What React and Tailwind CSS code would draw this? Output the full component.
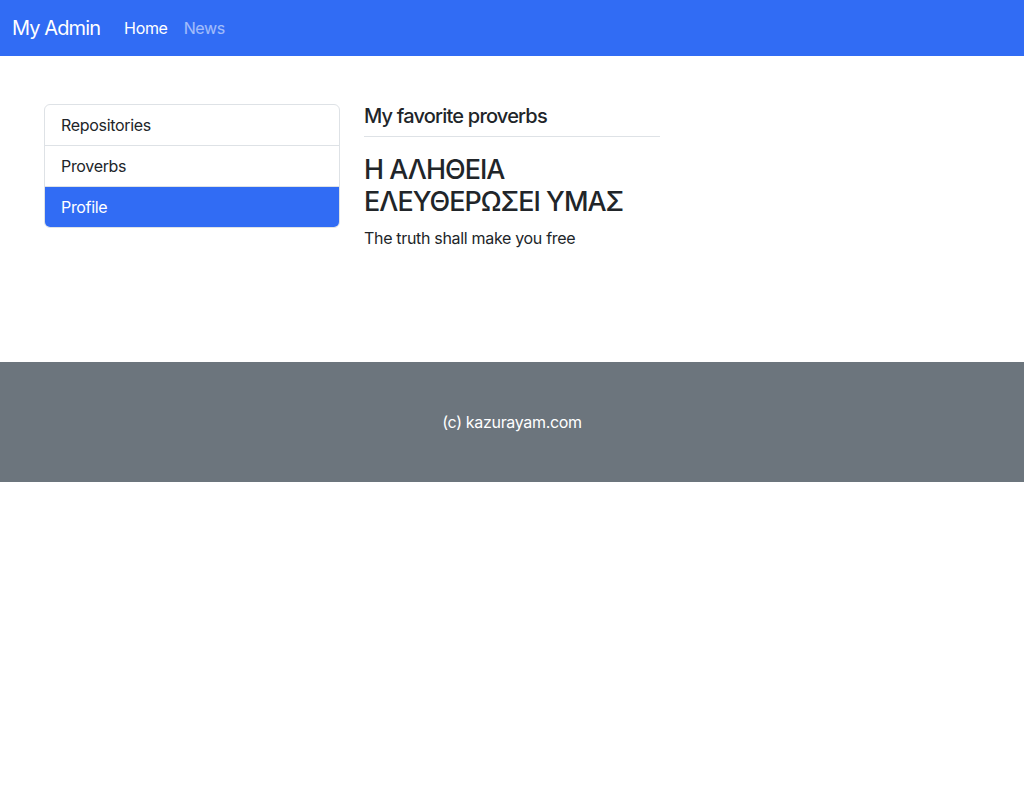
import React from 'react';

const menu = ['Repositories', 'Proverbs', 'Profile'];

const App = () => {
  return (
    <div className="min-h-[800px] bg-white text-[#212529] font-['Inter','Noto_Sans',sans-serif] text-base leading-6 tracking-[-0.02em]">
      <nav className="h-14 bg-[#316cf4] flex items-center px-3">
        <span className="text-[20px] text-white mr-4 tracking-[-0.045em]">My Admin</span>
        <a className="px-2 text-white">Home</a>
        <a className="px-2 text-white/55">News</a>
      </nav>

      <main className="w-[960px] mx-auto px-3 pt-12 pb-12">
        <div className="flex gap-6">
          <div className="w-[296px]">
            <ul className="border border-[#dee2e6] rounded-md overflow-hidden">
              {menu.map((item, i) => (
                <li
                  key={item}
                  className={`px-4 py-2 ${i > 0 ? 'border-t border-[#dee2e6]' : ''} ${
                    item === 'Profile' ? 'bg-[#316cf4] text-white border-[#316cf4]' : ''
                  }`}
                >
                  {item}
                </li>
              ))}
            </ul>
          </div>
          <div className="w-[296px]">
            <h5 className="text-[20px] leading-6 font-medium pb-2 border-b border-[#dee2e6] mb-4 tracking-[-0.04em]">
              My favorite proverbs
            </h5>
            <h3 className="text-[26.9px] leading-[32.3px] font-medium mb-2 tracking-[-0.035em]">
              Η ΑΛΗΘΕΙΑ ΕΛΕΥΘΕΡΩΣΕΙ ΥΜΑΣ
            </h3>
            <p className="mb-4">The truth shall make you free</p>
          </div>
        </div>
      </main>

      <footer className="mt-12 bg-[#6c757d] text-white text-center py-12">(c) kazurayam.com</footer>
    </div>
  );
};

export default App;
